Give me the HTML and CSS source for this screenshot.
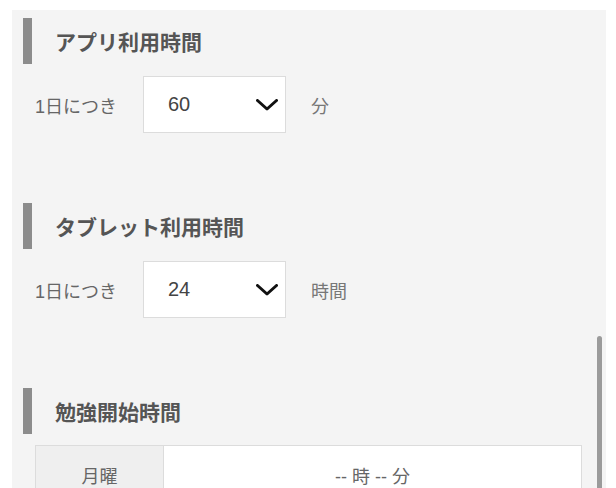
FILE: index.html
```html
<!DOCTYPE html>
<html lang="ja">
<head>
<meta charset="utf-8">
<title>設定</title>
<link rel="stylesheet" href="styles.css">
</head>
<body>
<div class="panel">
  <section class="section">
    <h2 class="heading"><span class="heading-bar"></span><span class="heading-text">アプリ利用時間</span></h2>
    <div class="row">
      <span class="row-label">1日につき</span>
      <div class="select"><span class="select-value">60</span>
        <svg class="chevron" viewBox="0 0 22 12" width="22" height="12"><path d="M1.5 1.5 L11 10 L20.5 1.5" fill="none" stroke="#111" stroke-width="3" stroke-linecap="round" stroke-linejoin="round"/></svg>
      </div>
      <span class="row-unit">分</span>
    </div>
  </section>
  <section class="section">
    <h2 class="heading"><span class="heading-bar"></span><span class="heading-text">タブレット利用時間</span></h2>
    <div class="row">
      <span class="row-label">1日につき</span>
      <div class="select"><span class="select-value">24</span>
        <svg class="chevron" viewBox="0 0 22 12" width="22" height="12"><path d="M1.5 1.5 L11 10 L20.5 1.5" fill="none" stroke="#111" stroke-width="3" stroke-linecap="round" stroke-linejoin="round"/></svg>
      </div>
      <span class="row-unit">時間</span>
    </div>
  </section>
  <section class="section">
    <h2 class="heading"><span class="heading-bar"></span><span class="heading-text">勉強開始時間</span></h2>
    <div class="table">
      <div class="table-row">
        <div class="table-label">月曜</div>
        <div class="table-value">-- 時 -- 分</div>
      </div>
    </div>
  </section>
  <div class="scroll-indicator"></div>
</div>
</body>
</html>
```
FILE: styles.css
```css
html, body {
  margin: 0;
  padding: 0;
  background: #ffffff;
  height: 488px;
  overflow: hidden;
}
body {
  font-family: "Liberation Sans", "Noto Sans CJK JP", sans-serif;
  color: #666;
}
.panel {
  margin: 10px 10px 0 12px;
  padding: 8px 24px 40px 11px;
  background: #f4f4f4;
  min-height: 600px;
}
.section {
  margin-bottom: 70px;
}
.heading {
  display: flex;
  align-items: center;
  height: 46px;
  margin: 0;
}
.heading-bar {
  width: 9px;
  height: 46px;
  background: #8c8c8c;
  flex: none;
}
.heading-text {
  margin-left: 23px;
  font-family: "Noto Sans CJK JP", sans-serif;
  font-size: 21px;
  font-weight: 700;
  color: #555;
}
.row {
  display: flex;
  align-items: center;
  margin: 12px 0 0 12px;
}
.row-label {
  width: 108px;
  font-size: 18px;
  color: #666;
}
.select {
  box-sizing: border-box;
  width: 143px;
  height: 57px;
  background: #fff;
  border: 1px solid #dcdcdc;
  display: flex;
  align-items: center;
  justify-content: space-between;
  padding: 0 7px 0 24px;
}
.select-value {
  font-size: 20px;
  color: #444;
}
.chevron {
  display: block;
  margin-top: 1px;
}
.row-unit {
  margin-left: 25px;
  font-size: 18px;
  color: #777;
}
.table {
  margin: 11px 0 0 12px;
  border: 1px solid #dcdcdc;
  background: #fff;
}
.table-row {
  display: flex;
  height: 58px;
}
.table-label {
  width: 127px;
  background: #efefef;
  border-right: 1px solid #dcdcdc;
  display: flex;
  align-items: center;
  justify-content: center;
  font-size: 18px;
  color: #666;
}
.table-value {
  flex: 1;
  display: flex;
  align-items: center;
  justify-content: center;
  font-size: 18px;
  color: #666;
}
.scroll-indicator {
  position: absolute;
  left: 597px;
  top: 336px;
  width: 5px;
  height: 200px;
  border-radius: 3px;
  background: #9b9b9b;
}
```
